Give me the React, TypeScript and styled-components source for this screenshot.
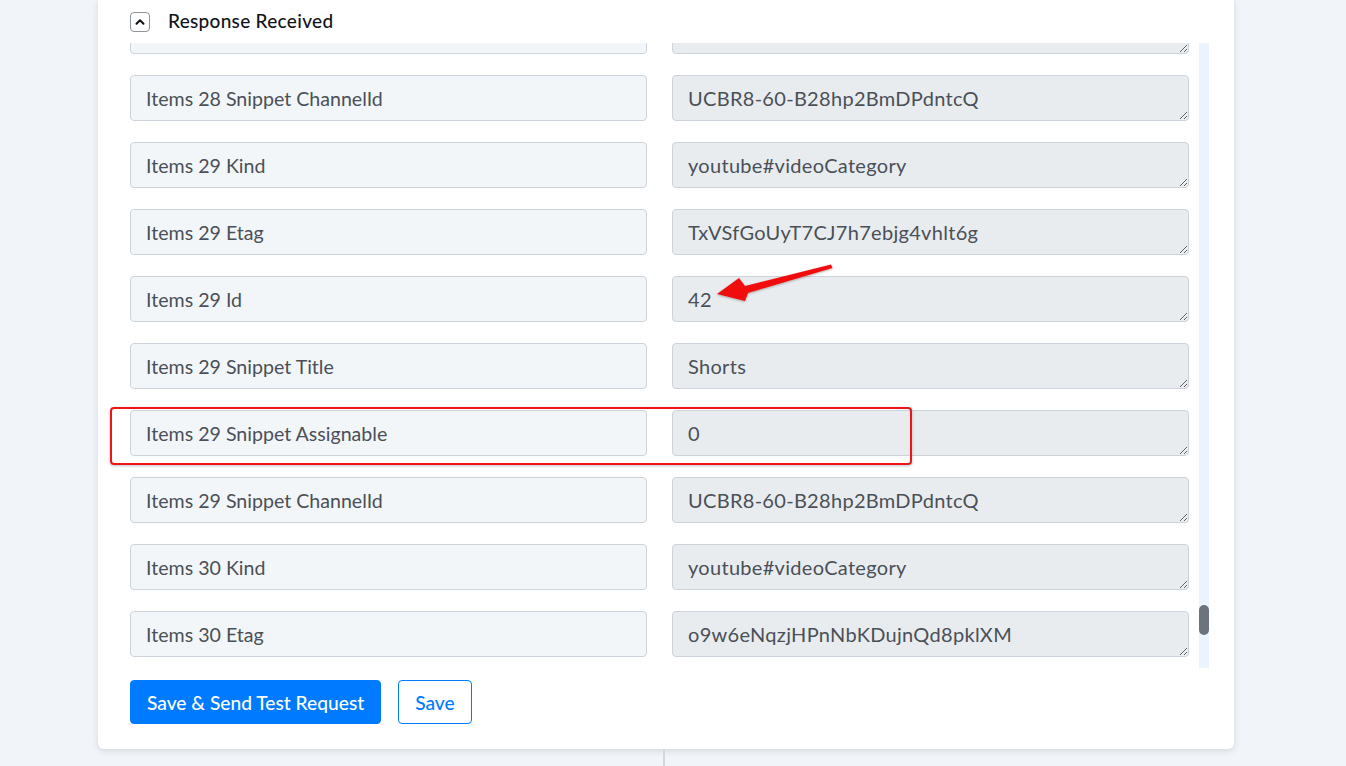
import React from "react";
import styled, { createGlobalStyle } from "styled-components";

const GlobalStyle = createGlobalStyle`
  html, body {
    margin: 0;
    padding: 0;
    background: #f1f4f8;
    font-family: Lato, "Open Sans", Arial, sans-serif;
  }
  * { box-sizing: border-box; }
`;

const Page = styled.div`
  position: relative;
  width: 1346px;
  height: 766px;
  overflow: hidden;
`;

const Card = styled.section`
  margin-left: 98px;
  width: 1136px;
  background: #ffffff;
  border-radius: 0 0 6px 6px;
  box-shadow: 0 2px 6px rgba(40, 52, 70, 0.14);
  padding: 12px 25px 25px 32px;
`;

const Header = styled.div`
  display: flex;
  align-items: center;
  gap: 18px;
  height: 20px;
`;

const ToggleButton = styled.button`
  width: 20px;
  height: 20px;
  padding: 0;
  display: flex;
  align-items: center;
  justify-content: center;
  background: #fff;
  border: 1px solid #8c939b;
  border-radius: 4px;
  cursor: pointer;
`;

const Title = styled.h3`
  margin: -3px 0 0;
  font-size: 19px;
  letter-spacing: 0.3px;
  font-weight: 500;
  color: #111418;
  line-height: 20px;
`;

const ScrollArea = styled.div`
  display: flex;
  margin-top: 11px;
  height: 625px;
`;

const Viewport = styled.div`
  flex: 1;
  overflow: hidden;
`;

const FieldGrid = styled.div`
  display: grid;
  grid-template-columns: 1fr 1fr;
  column-gap: 25px;
  row-gap: 21px;
  margin-top: -35px;
`;

const KeyInput = styled.input`
  height: 46px;
  width: 100%;
  padding: 0 15px;
  background: #f3f6f9;
  border: 1px solid #cdd3da;
  border-radius: 4px;
  font-family: inherit;
  font-size: 19.6px;
  color: #4a5057;
  outline: none;
`;

const ValueArea = styled.textarea`
  height: 46px;
  width: 100%;
  padding: 10px 15px;
  background: #e9ecef;
  border: 1px solid #cdd3da;
  border-radius: 4px;
  font-family: inherit;
  font-size: 20px;
  letter-spacing: 0.3px;
  line-height: 24px;
  color: #4a5057;
  resize: vertical;
  overflow: hidden;
  outline: none;
`;

const ScrollTrack = styled.div`
  width: 10px;
  margin-left: 10px;
  background: #eaf3fe;
  display: flex;
  flex-direction: column;
`;

const ScrollThumb = styled.div`
  margin-top: 562px;
  height: 30px;
  border-radius: 5px;
  background: #6c737d;
`;

const Actions = styled.div`
  display: flex;
  gap: 17px;
  margin-top: 12px;
`;

const Button = styled.button<{ $primary?: boolean }>`
  height: 44px;
  padding: 0 16px;
  border-radius: 4px;
  font-family: inherit;
  font-size: 19.2px;
  font-weight: 500;
  cursor: pointer;
  border: 1px solid #007bff;
  background: ${(p) => (p.$primary ? "#007bff" : "#ffffff")};
  color: ${(p) => (p.$primary ? "#ffffff" : "#007bff")};
`;

const LowerSplit = styled.div`
  display: grid;
  grid-template-columns: 665px 1fr;
  height: 40px;
`;

const SplitPane = styled.div<{ $divider?: boolean }>`
  border-right: ${(p) => (p.$divider ? "2px solid #d3d7dc" : "none")};
`;

const Highlight = styled.div`
  position: absolute;
  left: 110px;
  top: 407px;
  width: 802px;
  height: 58px;
  border: 2px solid #f0141a;
  border-radius: 4px;
  box-shadow: 0 1px 3px rgba(0, 0, 0, 0.25);
  pointer-events: none;
`;

const Pointer = styled.svg`
  position: absolute;
  left: 710px;
  top: 258px;
  width: 130px;
  height: 50px;
  overflow: visible;
  pointer-events: none;
`;

const fields: [string, string][] = [
  ["Items 28 Snippet Assignable", "1"],
  ["Items 28 Snippet ChannelId", "UCBR8-60-B28hp2BmDPdntcQ"],
  ["Items 29 Kind", "youtube#videoCategory"],
  ["Items 29 Etag", "TxVSfGoUyT7CJ7h7ebjg4vhlt6g"],
  ["Items 29 Id", "42"],
  ["Items 29 Snippet Title", "Shorts"],
  ["Items 29 Snippet Assignable", "0"],
  ["Items 29 Snippet ChannelId", "UCBR8-60-B28hp2BmDPdntcQ"],
  ["Items 30 Kind", "youtube#videoCategory"],
  ["Items 30 Etag", "o9w6eNqzjHPnNbKDujnQd8pklXM"],
];

export default function App() {
  return (
    <Page>
      <GlobalStyle />
      <Card>
        <Header>
          <ToggleButton aria-label="Collapse">
            <svg width="12" height="12" viewBox="0 0 12 12">
              <path
                d="M2.5 7.8 L6 4.3 L9.5 7.8"
                fill="none"
                stroke="#111"
                strokeWidth="2"
                strokeLinecap="round"
                strokeLinejoin="round"
              />
            </svg>
          </ToggleButton>
          <Title>Response Received</Title>
        </Header>
        <ScrollArea>
          <Viewport>
            <FieldGrid>
              {fields.map(([key, value]) => (
                <React.Fragment key={key}>
                  <KeyInput readOnly value={key} />
                  <ValueArea readOnly value={value} rows={1} />
                </React.Fragment>
              ))}
            </FieldGrid>
          </Viewport>
          <ScrollTrack>
            <ScrollThumb />
          </ScrollTrack>
        </ScrollArea>
        <Actions>
          <Button $primary>Save &amp; Send Test Request</Button>
          <Button>Save</Button>
        </Actions>
      </Card>
      <LowerSplit>
        <SplitPane $divider />
        <SplitPane />
      </LowerSplit>

      <Highlight />
      <Pointer viewBox="0 0 130 50">
        <defs>
          <filter id="arrowShadow" x="-20%" y="-50%" width="140%" height="200%">
            <feDropShadow dx="0" dy="1" stdDeviation="1" floodColor="#000" floodOpacity="0.3" />
          </filter>
        </defs>
        <polygon
          points="7,36 29,20 35,28 121,6.5 122.5,10 38,35 35,43"
          fill="#f00d0d"
          filter="url(#arrowShadow)"
        />
      </Pointer>
    </Page>
  );
}
